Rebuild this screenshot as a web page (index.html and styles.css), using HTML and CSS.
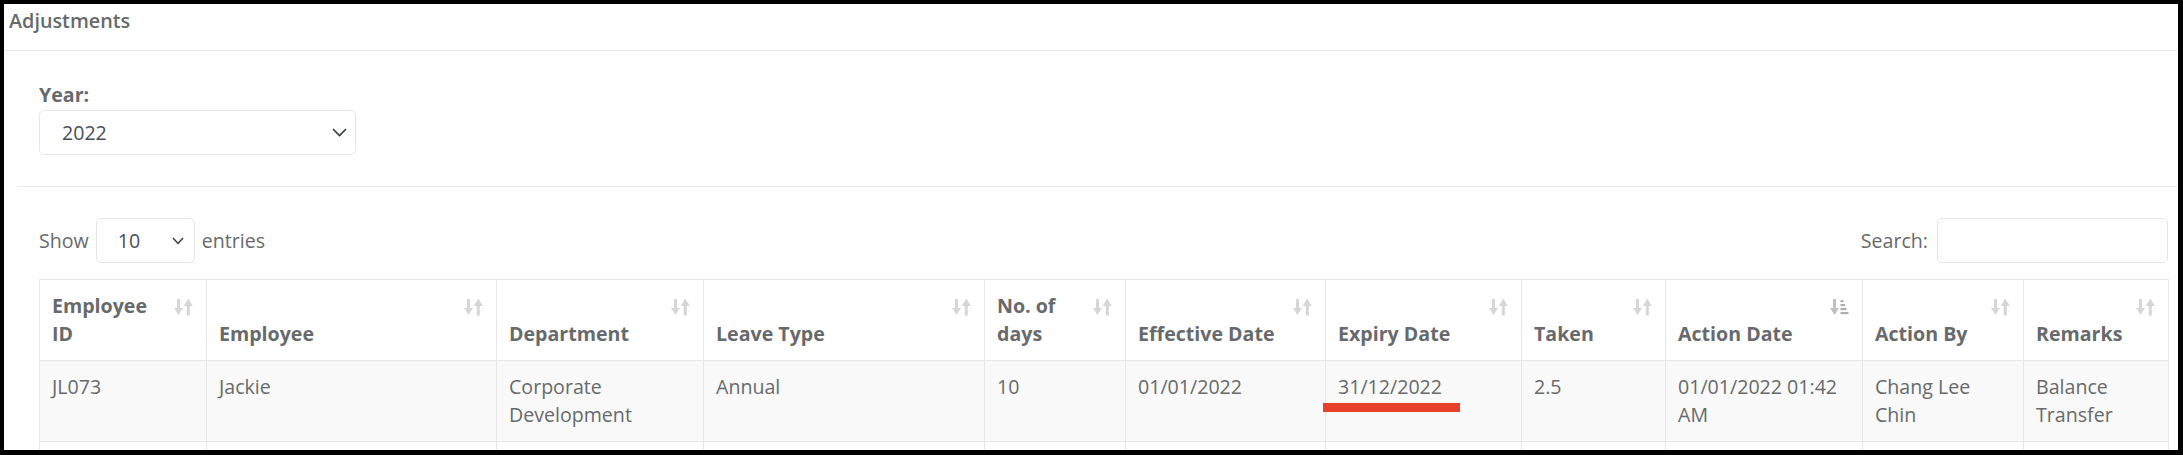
FILE: index.html
```html
<!DOCTYPE html>
<html lang="en">
    <head>
        <meta charset="UTF-8" />
        <meta name="viewport" content="width=device-width, initial-scale=1.0" />
        <title>Adjustments</title>
        <link rel="stylesheet" href="styles.css">
    </head>
    <body>
        <div class="ibox">
            <div class="ibox-title">
                <h5>Adjustments</h5>
            </div>

            <div class="ibox-content">
                <div class="form-group">
                    <label for="year">Year:</label>
                    <div class="select-box year-select" id="year">
                        <span>2022</span>
                        <svg width="15" height="9" viewBox="0 0 15 9"><path d="M1 1 L7.5 7.5 L14 1" fill="none" stroke="#343a40" stroke-width="1.6"/></svg>
                    </div>
                </div>

                <hr />

                <div class="table-wrapper">
                    <div class="toolbar">
                        <div class="length">
                            <span>Show</span>
                            <div class="select-box length-select">
                                <span>10</span>
                                <svg width="12" height="8" viewBox="0 0 12 8"><path d="M1 1 L6 6.5 L11 1" fill="none" stroke="#343a40" stroke-width="1.5"/></svg>
                            </div>
                            <span>entries</span>
                        </div>
                        <div class="search">
                            <label for="search">Search:</label>
                            <input type="search" id="search" />
                        </div>
                    </div>

                    <table class="data-table">
                        <colgroup>
                            <col class="c-id" />
                            <col class="c-emp" />
                            <col class="c-dept" />
                            <col class="c-type" />
                            <col class="c-days" />
                            <col class="c-eff" />
                            <col class="c-exp" />
                            <col class="c-taken" />
                            <col class="c-action-date" />
                            <col class="c-action-by" />
                            <col class="c-remarks" />
                        </colgroup>
                        <thead>
                            <tr>
                                <th>Employee ID<svg class="sort" viewBox="0 0 19 18"><rect x="3" y="1" width="3" height="10"/><polygon points="0,10 9,10 4.5,17"/><rect x="12.8" y="7" width="3" height="10.5"/><polygon points="9.8,8 18.8,8 14.3,0.5"/></svg></th>
                                <th>Employee<svg class="sort" viewBox="0 0 19 18"><rect x="3" y="1" width="3" height="10"/><polygon points="0,10 9,10 4.5,17"/><rect x="12.8" y="7" width="3" height="10.5"/><polygon points="9.8,8 18.8,8 14.3,0.5"/></svg></th>
                                <th>Department<svg class="sort" viewBox="0 0 19 18"><rect x="3" y="1" width="3" height="10"/><polygon points="0,10 9,10 4.5,17"/><rect x="12.8" y="7" width="3" height="10.5"/><polygon points="9.8,8 18.8,8 14.3,0.5"/></svg></th>
                                <th>Leave Type<svg class="sort" viewBox="0 0 19 18"><rect x="3" y="1" width="3" height="10"/><polygon points="0,10 9,10 4.5,17"/><rect x="12.8" y="7" width="3" height="10.5"/><polygon points="9.8,8 18.8,8 14.3,0.5"/></svg></th>
                                <th>No. of days<svg class="sort" viewBox="0 0 19 18"><rect x="3" y="1" width="3" height="10"/><polygon points="0,10 9,10 4.5,17"/><rect x="12.8" y="7" width="3" height="10.5"/><polygon points="9.8,8 18.8,8 14.3,0.5"/></svg></th>
                                <th>Effective Date<svg class="sort" viewBox="0 0 19 18"><rect x="3" y="1" width="3" height="10"/><polygon points="0,10 9,10 4.5,17"/><rect x="12.8" y="7" width="3" height="10.5"/><polygon points="9.8,8 18.8,8 14.3,0.5"/></svg></th>
                                <th>Expiry Date<svg class="sort" viewBox="0 0 19 18"><rect x="3" y="1" width="3" height="10"/><polygon points="0,10 9,10 4.5,17"/><rect x="12.8" y="7" width="3" height="10.5"/><polygon points="9.8,8 18.8,8 14.3,0.5"/></svg></th>
                                <th>Taken<svg class="sort" viewBox="0 0 19 18"><rect x="3" y="1" width="3" height="10"/><polygon points="0,10 9,10 4.5,17"/><rect x="12.8" y="7" width="3" height="10.5"/><polygon points="9.8,8 18.8,8 14.3,0.5"/></svg></th>
                                <th>Action Date<svg class="sort sorted" viewBox="0 0 19 18"><rect x="3" y="1" width="3" height="10"/><polygon points="0,10 9,10 4.5,17"/><rect class="bar" x="10.5" y="2" width="3" height="2.2"/><rect class="bar" x="10.5" y="6" width="4.5" height="2.2"/><rect class="bar" x="10.5" y="10" width="6" height="2.2"/><rect class="bar" x="10.5" y="14" width="8" height="2.2"/></svg></th>
                                <th>Action By<svg class="sort" viewBox="0 0 19 18"><rect x="3" y="1" width="3" height="10"/><polygon points="0,10 9,10 4.5,17"/><rect x="12.8" y="7" width="3" height="10.5"/><polygon points="9.8,8 18.8,8 14.3,0.5"/></svg></th>
                                <th>Remarks<svg class="sort" viewBox="0 0 19 18"><rect x="3" y="1" width="3" height="10"/><polygon points="0,10 9,10 4.5,17"/><rect x="12.8" y="7" width="3" height="10.5"/><polygon points="9.8,8 18.8,8 14.3,0.5"/></svg></th>
                            </tr>
                        </thead>
                        <tbody>
                            <tr class="odd">
                                <td>JL073</td>
                                <td>Jackie</td>
                                <td>Corporate Development</td>
                                <td>Annual</td>
                                <td>10</td>
                                <td>01/01/2022</td>
                                <td class="marked">31/12/2022<span class="mark"></span></td>
                                <td>2.5</td>
                                <td>01/01/2022 01:42 AM</td>
                                <td>Chang Lee<br />Chin</td>
                                <td>Balance Transfer</td>
                            </tr>
                            <tr class="even">
                                <td></td>
                                <td></td>
                                <td></td>
                                <td></td>
                                <td></td>
                                <td></td>
                                <td></td>
                                <td></td>
                                <td></td>
                                <td></td>
                                <td></td>
                            </tr>
                        </tbody>
                    </table>
                </div>
            </div>
        </div>
    </body>
</html>
```

FILE: styles.css
```css
html,
body {
    margin: 0;
}

body {
    background: #000;
    padding: 4px 5px 0 4px;
    height: 455px;
    box-sizing: border-box;
    overflow: hidden;
    font-family: "Open Sans", "Liberation Sans", sans-serif;
    font-size: 19.6px;
    line-height: 28px;
    color: #676a6c;
}

.ibox {
    background: #fff;
    height: 446px;
    overflow: hidden;
}

.ibox-title {
    padding: 3px 5px 15px;
    border-bottom: 1px solid #e7eaec;
}

.ibox-title h5 {
    margin: 0;
    font-size: 19.8px;
    font-weight: 600;
    line-height: 28px;
}

.ibox-content {
    padding: 30px 0 0 13px;
}

.form-group {
    padding-left: 22px;
}

.form-group label {
    display: block;
    font-weight: 700;
    margin-bottom: 1px;
}

.select-box {
    display: flex;
    justify-content: space-between;
    align-items: center;
    height: 45px;
    box-sizing: border-box;
    border: 1px solid #e5e6e7;
    border-radius: 5px;
    color: #495057;
    background: #fff;
}

.year-select {
    width: 317px;
    padding: 0 8px 0 22px;
}

.length-select {
    width: 99px;
    padding: 0 10px 0 21px;
}

hr {
    margin: 31px 0 0;
    border: 0;
    border-top: 1px solid #e7eaec;
}

.table-wrapper {
    margin: 0 10px 0 22px;
}

.toolbar {
    display: flex;
    justify-content: space-between;
    align-items: center;
    margin-top: 31px;
}

.length {
    display: flex;
    align-items: center;
    gap: 7px;
}

.search {
    display: flex;
    align-items: center;
    gap: 9px;
}

.search input {
    width: 231px;
    height: 45px;
    box-sizing: border-box;
    border: 1px solid #e5e6e7;
    border-radius: 5px;
    margin: 0;
}

.data-table {
    margin-top: 16px;
    width: 100%;
    table-layout: fixed;
    border-collapse: collapse;
}

.c-id { width: 167px; }
.c-emp { width: 290px; }
.c-dept { width: 207px; }
.c-type { width: 281px; }
.c-days { width: 141px; }
.c-eff { width: 200px; }
.c-exp { width: 196px; }
.c-taken { width: 144px; }
.c-action-date { width: 197px; }
.c-action-by { width: 161px; }
.c-remarks { width: 145px; }

.data-table th,
.data-table td {
    border: 1px solid #e7e7e7;
    padding: 12px;
    text-align: left;
}

.data-table th {
    position: relative;
    vertical-align: bottom;
    padding-right: 40px;
    font-weight: 700;
}

.data-table td {
    vertical-align: top;
    height: 56px;
}

.sort {
    position: absolute;
    top: 18px;
    right: 13px;
    width: 19px;
    height: 18px;
    fill: #d6d6d6;
}

.sort.sorted {
    fill: #c0c0c0;
}

.sort .bar {
    fill: #aeaeae;
}

tr.odd td {
    background: #f9f9f9;
}

.marked {
    position: relative;
}

.mark {
    position: absolute;
    left: -3px;
    top: 42px;
    width: 137px;
    height: 9px;
    background: #e8402a;
}
```
